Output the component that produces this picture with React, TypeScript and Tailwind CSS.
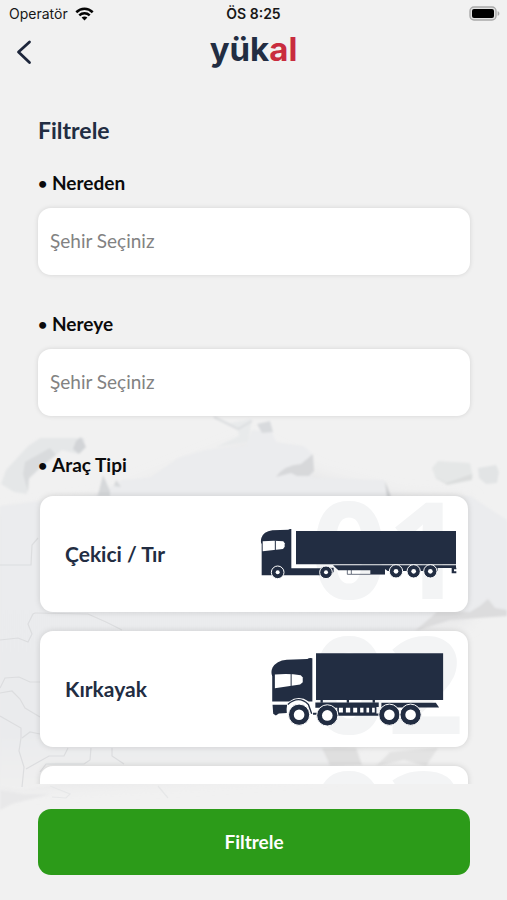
import { type ReactNode } from 'react';

function Wifi() {
  return (
    <svg viewBox="0 0 20 15" className="h-[14px] w-[19px]" aria-hidden="true">
      <g fill="none" stroke="#050505" strokeWidth="2.7">
        <path d="M1.2 5.6C6.3.7 13.7.7 18.8 5.6" />
        <path d="M4.4 9C7.6 6 12.4 6 15.6 9" />
      </g>
      <path d="M10 14.4 6.9 11.2C8.7 9.7 11.3 9.7 13.1 11.2Z" fill="#050505" />
    </svg>
  );
}

function Battery() {
  return (
    <svg viewBox="0 0 31 15" className="h-[15px] w-[31px]" aria-hidden="true">
      <rect x="1" y="1" width="26" height="13" rx="4" fill="#e2e2e2" stroke="#a9a9a9" strokeWidth="1.4" />
      <rect x="3" y="3" width="22" height="9" rx="2" fill="#000" />
      <path d="M28.6 5.2C31 5.8 31 9.2 28.6 9.8Z" fill="#a9a9a9" />
    </svg>
  );
}

function Wheel({ x, y, r, hub }: { x: number; y: number; r: number; hub: number }) {
  return (
    <>
      <circle cx={x} cy={y} r={r} fill="#222d42" stroke="#fff" strokeWidth="3" />
      <circle cx={x} cy={y} r={hub} fill="#fff" />
    </>
  );
}

function SemiTruck() {
  return (
    <svg viewBox="57 117 591 156" className="h-[52px] w-[197px]" aria-hidden="true">
      <g fill="#222d42">
        <path d="M62 258V165Q58 160 61 147Q67 128 94 124L142 122Q144 119 151 120V238H240L278 236V248L270 259H62Z" />
        <path d="M165 126H645V226H165Z" />
        <path d="M276 229H645V237H590V246H440L432 240V255H388V244H292Z" />
        <path d="M632 236H646V241H639V247H646V253H632Z" />
      </g>
      <path d="M65 157Q100 153 127 157L131 163V173L126 180L65 187Z" fill="#fff" />
      <path d="M103 155V184" stroke="#222d42" strokeWidth="3" />
      <path d="M319 243V256H432M331 243V255" fill="none" stroke="#222d42" strokeWidth="2" />
      <Wheel x={110} y={250} r={19} hub={6} />
      <Wheel x={255} y={250} r={19} hub={6} />
      <Wheel x={465} y={247} r={20} hub={7} />
      <Wheel x={518} y={247} r={20} hub={7} />
      <Wheel x={568} y={247} r={20} hub={7} />
    </svg>
  );
}

function BoxTruck() {
  return (
    <svg viewBox="90 78 526 226" className="h-[75px] w-[175px]" aria-hidden="true">
      <g fill="#222d42">
        <path d="M96 227V151Q91 139 97 125Q108 104 140 101L202 99Q207 95 217 97V227H206Q176 206 147 227Z" />
        <path d="M97 237H141Q138 252 140 262L116 263L107 269L99 264Z" />
        <path d="M228 82H611V223H228Z" />
        <path d="M226 230H417V244H410V263H418V270H292V246H226Z" />
        <path d="M425 231H589L599 245H425Z" />
        <path d="M219 261H234V267H219Z" />
      </g>
      <path d="M104 146Q145 142 182 148L188 155V169L180 176L104 187Z" fill="#fff" />
      <path d="M153 144V181" stroke="#222d42" strokeWidth="3" />
      <path d="M143 236Q176 207 205 236L215 264" fill="none" stroke="#222d42" strokeWidth="4" />
      <path d="M297 246H309V260H297ZM318 246H331V260H318ZM340 246H352V260H340ZM361 246H371V260H361ZM380 246H388V260H380ZM397 246H405V260H397Z" fill="#fff" />
      <path d="M245 222V231M324 222V231M402 222V231" stroke="#222d42" strokeWidth="7" />
      <Wheel x={177} y={267} r={32} hub={16} />
      <Wheel x={262} y={269} r={32} hub={16} />
      <Wheel x={449} y={267} r={32} hub={16} />
      <Wheel x={513} y={267} r={32} hub={16} />
    </svg>
  );
}

function MapBackdrop() {
  return (
    <svg
      viewBox="0 400 507 440"
      preserveAspectRatio="none"
      className="absolute inset-x-0 bottom-[60px] -z-10 h-[440px] w-full"
      aria-hidden="true"
    >
      <defs>
        <linearGradient id="land" x1="0" y1="0" x2="0" y2="1">
          <stop offset="0" stopColor="#ebecee" />
          <stop offset="0.85" stopColor="#eaebed" />
          <stop offset="1" stopColor="#f0f0f0" />
        </linearGradient>
        <filter id="soft" x="-10%" y="-10%" width="120%" height="120%">
          <feGaussianBlur stdDeviation="7" />
        </filter>
        <filter id="edge">
          <feGaussianBlur stdDeviation="1" />
        </filter>
      </defs>
      <path d="M0 515L100 500L250 440L320 475L400 495L470 500V622L420 632L340 770L200 780L0 790Z" fill="#e8e8e9" filter="url(#soft)" />
      <g filter="url(#edge)">
        <path d="M0 506L100 494L122 480L150 478L178 458L205 450L246 446L252 430L272 432L276 442L304 446L312 454V478L384 480L389 497L470 496L507 520V612H468L440 608L418 631L390 660L340 700L328 770L220 776L60 784L20 790L0 786Z" fill="url(#land)" />
        <path d="M1 484L6 470L28 446L40 438H76L84 438L85 446L78 454L62 450L42 466L28 480L27 494L14 492Z" fill="#e5e7e8" />
        <path d="M28 492L23 474L25 462L50 448L56 455L42 466L29 478Z" fill="#d9dbdd" />
        <path d="M76 441L81 437L86 447L79 454L73 449Z" fill="#d2d4d7" />
        <path d="M98 495L103 475L110 491V496H96ZM116 480L121 487L114 486Z" fill="#d6d8da" />
        <path d="M212 417L230 423L252 419L248 442L216 447L239 436L238 429Z" fill="#e8eaeb" />
        <path d="M214 417L238 429L252 421" fill="none" stroke="#dcdee0" strokeWidth="2" />
        <path d="M257 424L270 421L273 432L262 433Z" fill="#d8dadd" />
        <path d="M276 477Q284 465 301 464L313 454L314 471L309 476H297L291 473Z" fill="#d7d8da" />
        <path d="M385 481L391 497H387Z" fill="#cdcfd1" />
        <path d="M432 468L438 461L470 463L473 477L455 481L446 484L436 479Z" fill="#e5e7e7" />
        <path d="M433 474L446 483L472 474V480L447 485Z" fill="#dbdddd" />
        <path d="M478 468L496 465L499 472L497 483L486 484L479 478Z" fill="#e2e4e5" />
        <path d="M415 631L437 612H470L480 606L488 599L495 608L507 610V616L450 620Z" fill="#dcdcdd" />
        <path d="M322 748H356L362 765H330Z" fill="#dfdfdf" />
        <path d="M376 766L390 752L438 748L426 766L404 760Z" fill="#e3e3e3" />
      </g>
      <g fill="none" stroke="#dcdddf" strokeWidth="1.2">
        <path d="M0 565H31L32 545L38 538M35 613L33 614L28 624L32 634L28 642L18 638L0 640" />
        <path d="M35 613L88 614L106 622L122 630" />
        <path d="M0 688L5 678L19 677L30 682H40" />
        <path d="M0 693L12 691L20 699L25 708L40 717" />
        <path d="M0 716L21 728V738L19 751L24 767L22 787" />
        <path d="M22 738L30 732L40 734M26 769L49 756L64 756L68 748M91 748L90 760L84 764H46L40 772M112 748V756L124 764" />
        <path d="M50 786L70 794L66 798L52 797M158 786L168 798" stroke="#e6e7e8" />
      </g>
      <path d="M0 790L24 794L50 794L12 804L0 810Z" fill="#e8e8e9" filter="url(#edge)" />
    </svg>
  );
}

function Bullet() {
  return <span className="w-[14px] text-base">•</span>;
}

function CityField({ id, label }: { id: string; label: string }) {
  return (
    <div className="mb-[35px]">
      <label htmlFor={id} className="flex h-7 items-center text-[19px] font-bold text-[#0b0b0c]">
        <Bullet />
        {label}
      </label>
      <input
        id={id}
        type="text"
        placeholder="Şehir Seçiniz"
        className="mt-[11px] block h-[67px] w-full rounded-[13px] bg-white px-3 pb-[3px] text-[19px] text-[#222d42] shadow-[0_0_5px_rgba(0,0,0,0.12)] outline-none placeholder:text-[#828282]"
      />
    </div>
  );
}

const vehicles: { no: string; name: string; picture: ReactNode; inset: string }[] = [
  { no: '01', name: 'Çekici / Tır', picture: <SemiTruck />, inset: 'pr-[11px]' },
  { no: '02', name: 'Kırkayak', picture: <BoxTruck />, inset: 'pr-[23px]' },
  { no: '03', name: '', picture: null, inset: 'pr-[23px]' },
];

export default function App() {
  return (
    <div className="relative isolate flex h-screen flex-col overflow-hidden bg-[#f1f1f1] font-[Lato,'Open_Sans',sans-serif]">
      <MapBackdrop />
      <div className="grid h-[27px] grid-cols-3 items-center px-[7px] font-[Inter,'Liberation_Sans',sans-serif] text-[14px] text-[#171717]">
        <div className="flex items-center gap-[7px] pl-[2px]">
          <span>Operatör</span>
          <Wifi />
        </div>
        <span className="text-center font-semibold">ÖS 8:25</span>
        <span className="flex justify-end">
          <Battery />
        </span>
      </div>

      <header className="grid h-[50px] grid-cols-3 items-center px-4">
        <button type="button" aria-label="Geri" className="flex h-8 w-8 items-center">
          <svg viewBox="0 0 16 26" className="h-[26px] w-4" fill="none" stroke="#1d263b" strokeWidth="2.8" strokeLinecap="round" strokeLinejoin="round">
            <path d="M13.5 3 2.5 13l11 10.500" />
          </svg>
        </button>
        <div className="pb-[6px] text-center font-[Inter,sans-serif] text-[33px] leading-[44px] font-bold text-[#222d42]">
          yük<span className="text-[#c92c3e]">al</span>
        </div>
      </header>

      <main className="flex min-h-0 flex-1 flex-col pr-[37px] pl-[38px]">
        <h1 className="mt-[39px] mb-[25px] text-[23px] leading-7 font-bold text-[#222d42]">Filtrele</h1>
        <CityField id="nereden" label="Nereden" />
        <CityField id="nereye" label="Nereye" />
        <h2 className="flex h-7 items-center text-[19px] font-bold text-[#0b0b0c]">
          <Bullet />
          Araç Tipi
        </h2>
        <div className="-mx-2 mt-[7px] flex min-h-0 flex-1 flex-col gap-[19px] overflow-y-auto px-[10px] pt-[10px] [scrollbar-width:none]">
          {vehicles.map((v) => (
            <button
              key={v.no}
              type="button"
              className={`relative flex h-[116px] shrink-0 items-center justify-between overflow-hidden rounded-[13px] bg-white pl-[25px] shadow-[0_0_6px_rgba(0,0,0,0.14)] ${v.inset}`}
            >
              <span className="absolute top-0 right-1 font-['Open_Sans',sans-serif] text-[134px] leading-[102px] font-bold text-[#f3f4f5]">{v.no}</span>
              <span className="relative text-[21px] font-bold text-[#222d42]">{v.name}</span>
              <span className="relative">{v.picture}</span>
            </button>
          ))}
        </div>
        <button type="button" className="mt-[25px] mb-[25px] h-[66px] shrink-0 rounded-[13px] bg-[#2c9b19] text-[19px] font-bold text-white">
          Filtrele
        </button>
      </main>
    </div>
  );
}
